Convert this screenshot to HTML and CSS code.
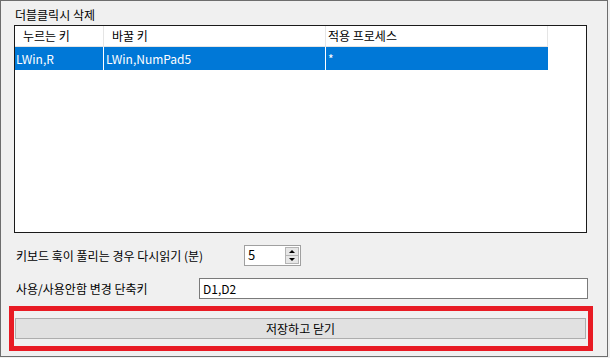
FILE: index.html
```html
<!DOCTYPE html>
<html>
<head>
    <title>단축키 설정</title>
    <link rel="stylesheet" href="styles.css">
</head>
<body>
    <div class="window">
        <div class="group-title">더블클릭시 삭제</div>

        <div class="list">
            <div class="list-head">
                <div class="col col-1">누르는 키</div>
                <div class="col col-2">바꿀 키</div>
                <div class="col col-3">적용 프로세스</div>
            </div>
            <div class="list-row selected">
                <div class="col col-1">LWin,R</div>
                <div class="col col-2">LWin,NumPad5</div>
                <div class="col col-3">*</div>
            </div>
        </div>

        <div class="spin-row">
            <span class="label">키보드 훅이 풀리는 경우 다시읽기 (분)</span>
            <div class="spin">
                <span class="spin-value">5</span>
                <div class="spin-buttons">
                    <div class="spin-btn"><span class="tri up"></span></div>
                    <div class="spin-btn"><span class="tri down"></span></div>
                </div>
            </div>
        </div>

        <div class="key-row">
            <span class="label">사용/사용안함 변경 단축키</span>
            <div class="text-box">D1,D2</div>
        </div>

        <div class="highlight">
            <button class="save-btn">저장하고 닫기</button>
        </div>
    </div>
</body>
</html>
```

FILE: styles.css
```css
body {
    margin: 0;
    background: #f0f0f0;
    font-family: "Noto Sans CJK KR", "Noto Sans", sans-serif;
    font-size: 12px;
    color: #000;
}
.window {
    box-sizing: border-box;
    width: 608px;
    height: 357px;
    border: 1px solid #6d6d6d;
    background: #f0f0f0;
    padding: 6px 0 0 15px;
}
.group-title {
    line-height: 16px;
    height: 16px;
    margin-left: -1px;
}

/* list view */
.list {
    box-sizing: border-box;
    width: 573px;
    height: 208px;
    margin: 2px 0 0 -2px;
    border: 1px solid #1a1a1a;
    background: #fff;
}
.list-head,
.list-row {
    display: flex;
    width: 533px;
}
.list-head {
    height: 20px;
    border-bottom: 1px solid #e5e5e5;
    line-height: 20px;
}
.list-row {
    height: 23px;
    line-height: 23px;
}
.col {
    box-sizing: border-box;
    border-right: 1px solid #e5e5e5;
    white-space: nowrap;
}
.col-1 { width: 89px; }
.col-2 { width: 222px; }
.col-3 { width: 222px; }
.list-head .col-1 { padding-left: 8px; }
.list-head .col-2 { padding-left: 8px; }
.list-head .col-3 { padding-left: 2px; }
.selected {
    background: #0078d7;
    color: #fff;
}
.selected .col {
    border-right-color: #fff;
}
.selected .col-3 {
    border-right: none;
}
.selected .col-1 { padding-left: 1px; }
.selected .col-2 { padding-left: 2px; }
.selected .col-3 { padding-left: 2px; }

/* form rows */
.spin-row,
.key-row {
    display: flex;
    align-items: center;
    height: 21px;
}
.spin-row {
    margin-top: 12px;
}
.key-row {
    margin-top: 12px;
}
.spin-row .label {
    width: 228px;
}
.key-row .label {
    width: 183px;
}
.spin {
    box-sizing: border-box;
    display: flex;
    width: 57px;
    height: 21px;
    border: 1px solid #a0a0a0;
    background: #fff;
}
.spin-value {
    flex: 1;
    padding-left: 3px;
    line-height: 17px;
    font-size: 13px;
}
.spin-buttons {
    display: flex;
    flex-direction: column;
    width: 14px;
    margin: 1px 1px 1px 0;
}
.spin-btn {
    flex: 1;
    display: flex;
    align-items: center;
    justify-content: center;
    background: #e6e6e6;
    border: 1px solid #b4b4b4;
}
.spin-btn + .spin-btn {
    border-top: none;
}
.tri {
    width: 0;
    height: 0;
    border-left: 3px solid transparent;
    border-right: 3px solid transparent;
}
.tri.up {
    border-bottom: 3px solid #000;
}
.tri.down {
    border-top: 3px solid #000;
}
.text-box {
    box-sizing: border-box;
    width: 389px;
    height: 21px;
    border: 1px solid #7a7a7a;
    background: #fff;
    padding-left: 3px;
    line-height: 19px;
}

/* red marker round the save button */
.highlight {
    box-sizing: border-box;
    width: 584px;
    margin: 7px 0 0 -7px;
    border: 5px solid #e81b24;
    padding: 7px 2px 7px 1px;
}
.save-btn {
    display: block;
    width: 100%;
    height: 21px;
    border: 1px solid #adadad;
    background: #e1e1e1;
    font-family: inherit;
    font-size: 12px;
    color: #000;
    padding: 0;
}
```
